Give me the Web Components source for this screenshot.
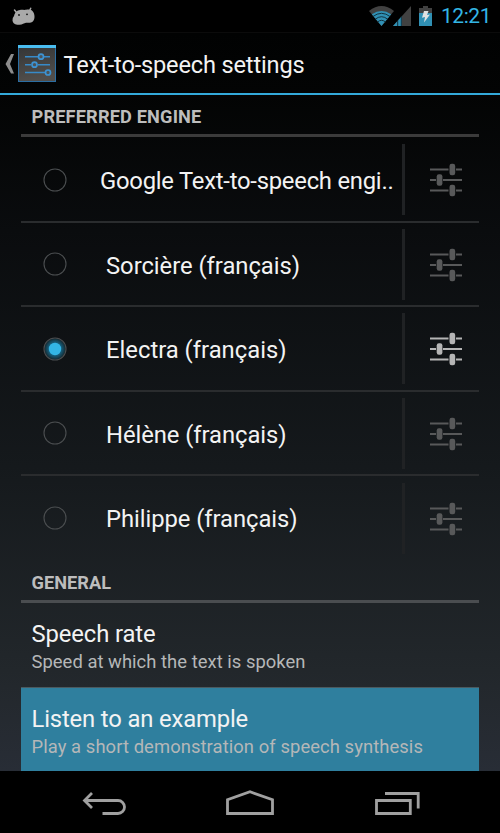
<!DOCTYPE html>
<html lang="en">
<head>
<meta charset="utf-8">
<title>Text-to-speech settings</title>
<style>
html,body{margin:0;height:100%;background:#000;overflow:hidden}
body{font-family:Roboto,"Noto Sans",sans-serif;color:#f3f3f3}
</style>
</head>
<body>
<tts-screen></tts-screen>
<script>
const define=(name,html,setup)=>{
  const t=document.createElement('template');t.innerHTML=html;
  customElements.define(name,class extends HTMLElement{
    constructor(){super();this.attachShadow({mode:'open'}).append(t.content.cloneNode(true));}
    connectedCallback(){setup&&setup(this,this.shadowRoot);}
  });
};

/* One line of text whose tracking is adjusted to reach a given advance width. */
define('fit-text',`<style>:host{display:block;white-space:nowrap}span{display:inline-block}</style><span></span>`,(el,root)=>{
  const s=root.querySelector('span');s.textContent=el.getAttribute('text');
  const want=+el.getAttribute('width'),w=s.getBoundingClientRect().width;
  if(want&&w)s.style.letterSpacing=((want-w)/s.textContent.length)+'px';
});

define('status-bar',`<style>
:host{display:flex;height:32px;background:#000;align-items:flex-start;justify-content:space-between;box-sizing:border-box;padding:0 9px 0 12px}
svg{display:block}.right{display:flex}
fit-text{font-size:21px;line-height:33px;color:#33b5e5;margin-left:9px}
.w{margin:6px 0 0}.b{margin:5px 0 0 7px}.d{margin-top:7px}
</style>
<svg class="d" width="24" height="19" viewBox="0 0 24 19"><g fill="#a9a9a9"><path d="M2 9C3 5 5 3.500 8 3C10 2.600 12 3.200 14 2.800C18 2 20.500 3 21.800 6C23 9 22.800 13 20.500 14.800C18.500 16.300 16 15.500 14 15.700C12 16 10.500 17.700 7.500 17.700C4 18 1 17 .5 13.500Q.3 10.500 2 9Z"/><path d="M4.500 5.500L2.500 3M17.500 4L18.700 1.200" stroke="#a9a9a9" stroke-width="1.500" stroke-linecap="round"/></g><circle cx="7" cy="8" r=".9" fill="#111"/><circle cx="15" cy="7.300" r=".9" fill="#111"/></svg>
<div class="right">
<svg class="w" width="43" height="21" viewBox="0 0 43 21"><path d="M0 5Q12.500-5 25 5L12.500 20Z" fill="#414141"/><path d="M2.800 8.300Q12.500 1.600 22.200 8.300L12.500 20Z" fill="#3090b4"/><path d="M3.800 10.600Q12.500 4 21.200 10.600M6 13.400Q12.500 8 19 13.400M8.500 16Q12.500 12.600 16.500 16" fill="none" stroke="#0c2833" stroke-width=".9"/><path d="M42 0V20H24Z" fill="#414141"/><path d="M24 20L33 10V20Z" fill="#3090b4"/><path d="M28.700 14V20M32.300 10V20" stroke="#07141a" stroke-width=".8"/></svg>
<svg class="b" width="13" height="22" viewBox="0 0 13 22"><path d="M4 1H9V3H13V8H0V3H4Z" fill="#414141"/><path d="M0 8H13V21H0Z" fill="#3090b4"/><path d="M5 6H9.500L8 10L11 9.500L5 17.500L6 12L3 12.700Z" fill="#e2e2e2"/></svg>
<fit-text text="12:21" width="50"></fit-text></div>`);

define('action-bar',`<style>
:host{display:flex;height:63px;box-sizing:border-box;border-top:1px solid #0b0b0b;border-bottom:2px solid #33a9da;background:linear-gradient(#010202,#030404);padding-left:5px}
.c{margin:21px 3px 0 0}.s{margin-top:12px}fit-text{font-size:23.600px;line-height:30px;margin:17px 0 0 7.500px}svg{display:block}
</style>
<svg class="c" width="10" height="20" viewBox="0 0 10 20"><path d="M6 0H9L5 10L9 19.500H6L.5 10Z" fill="#8c8c8c"/></svg>
<svg class="s" width="38" height="37" viewBox="0 0 38 37"><defs><linearGradient id="g" x2=".2" y2="1"><stop stop-color="#333536"/><stop offset="1" stop-color="#514e4b"/></linearGradient></defs><rect x=".5" y=".5" width="37" height="36" fill="url(#g)" stroke="#2b6ea3"/><path d="M0 0H38V3H0Z" fill="#4abdf0"/><path d="M7 11.700H20M26 11.700H32M7 19.700H13M20 19.700H32M7 27.500H27" stroke="#378ac8" stroke-width="1.500"/><g fill="#4d5357" stroke="#3d93d2" stroke-width="1.700"><circle cx="23" cy="11.700" r="2.500"/><circle cx="16.500" cy="19.700" r="2.500"/><circle cx="30" cy="27.500" r="2.500"/></g></svg>
<fit-text text="Text-to-speech settings" width="241"></fit-text>`);

define('section-header',`<style>
:host{display:block;box-sizing:border-box;height:42px;margin-bottom:1px;border-bottom:3px solid var(--line,#3b3b3b);padding:0 0 0 10.500px;font-size:18.200px;font-weight:700;line-height:43px;color:#bdbdbd}
</style><slot></slot>`);

define('sliders-icon',`<style>:host{display:block;color:#58595a}:host([on]){color:#b5b5b5}svg{display:block}</style>
<svg width="32" height="34" viewBox="0 0 32 34"><path d="M0 6.500H18.500M26 6.500H32M0 17H6M13 17H32M0 27.500H18.500M26 27.500H32" stroke="currentColor" stroke-width="1.900"/><g fill="currentColor"><rect x="19.500" y=".7" width="5.700" height="11.600" rx="2.200"/><rect x="6.700" y="11.200" width="5.700" height="11.600" rx="2.200"/><rect x="19.500" y="21.700" width="5.700" height="11.600" rx="2.200"/></g></svg>`);

define('radio-mark',`<style>:host{display:block}svg{display:block}.dot{display:none}:host([on]) .dot{display:block}</style>
<svg width="24" height="24" viewBox="0 0 24 24"><defs><radialGradient id="h"><stop offset=".45" stop-color="#177399"/><stop offset=".95" stop-color="#15313c"/></radialGradient></defs><circle class="dot" cx="12" cy="12" r="10.500" fill="url(#h)"/><circle cx="12" cy="12" r="11" fill="none" stroke="#4b4e50" stroke-width="1.100"/><circle class="dot" cx="12" cy="12" r="6.200" fill="#33b5e5"/></svg>`);

define('engine-row',`<style>
:host{display:grid;grid-template-columns:81px 1fr 57px;height:84.600px;box-sizing:border-box;border-bottom:2px solid #2a2c2e}
:host([last]){border-bottom-color:transparent}
radio-mark{margin:29.700px 0 0 21.500px}
fit-text{font-size:23.800px;line-height:30px;margin-top:28px}
.side{box-sizing:border-box;width:77px;height:71px;margin:6.200px 0 0 -20px;border-left:3px solid #202224;padding:19px 0 0 24.500px}
</style><radio-mark></radio-mark><fit-text></fit-text><div class="side"><sliders-icon></sliders-icon></div>`,(el,r)=>{
  if(el.hasAttribute('on')){r.querySelector('radio-mark').setAttribute('on','');r.querySelector('sliders-icon').setAttribute('on','');}
  const old=r.querySelector('fit-text'),t=document.createElement('fit-text');
  t.setAttribute('text',el.getAttribute('name'));t.setAttribute('width',el.getAttribute('width'));
  t.style.marginLeft=(el.getAttribute('indent')||4)+'px';old.replaceWith(t);
});

define('setting-item',`<style>
:host{display:block;height:83.300px;box-sizing:border-box;padding:15.500px 0 0 10.500px}
:host([active]){height:84.500px;background:#2f7f9e;border-top:1px solid #4b5a60;padding-top:16px}
::slotted([slot=title]){font-size:23.800px;line-height:30px;color:#f3f3f3}
::slotted([slot=note]){font-size:18.400px;line-height:24px;color:#b5b7b8;margin-top:1px}
</style><slot name="title"></slot><slot name="note"></slot>`);

define('nav-bar',`<style>:host{display:flex;height:62px;background:#000;justify-content:space-between;box-sizing:border-box;padding:18px 80px 0 81.500px}svg{display:block;fill:none;stroke:#a0a0a0;stroke-width:2.800}</style>
<svg width="45" height="28" viewBox="0 0 45 28"><path d="M2 11.500H36A6.500 6.500 0 0 1 36 24.500H20.500M10 4L2.500 11.500L10 19"/></svg>
<svg width="49" height="28" viewBox="0 0 49 28"><path d="M1.500 24.500V10.800L24 2.800L46.500 10.800V24.500Z"/></svg>
<svg width="45" height="28" viewBox="0 0 45 28"><path d="M1.500 11.500H35.300V24.500H1.500ZM10 4.500H43.200V19.500"/></svg>`);

define('tts-screen',`<style>
:host{display:flex;flex-direction:column;height:833px;width:500px}
main{flex:1;min-height:0;overflow:hidden;box-sizing:border-box;padding:0 21px;background:linear-gradient(#030404,#0a0c0e 20%,#15191c 55%,#22272b 85%,#282d36)}
</style>
<status-bar></status-bar><action-bar></action-bar>
<main>
<section-header><fit-text text="PREFERRED ENGINE" width="170"></fit-text></section-header>
<engine-row name="Google Text-to-speech engi.." width="293.500" indent="-2"></engine-row>
<engine-row name="Sorcière (français)" width="194"></engine-row>
<engine-row name="Electra (français)" width="180.500" on></engine-row>
<engine-row name="Hélène (français)" width="180.500"></engine-row>
<engine-row name="Philippe (français)" width="191.500" last></engine-row>
<section-header style="--line:#4a4d50"><fit-text text="GENERAL" width="79.500"></fit-text></section-header>
<setting-item><fit-text slot="title" text="Speech rate" width="124"></fit-text><fit-text slot="note" text="Speed at which the text is spoken" width="274"></fit-text></setting-item>
<setting-item active><fit-text slot="title" text="Listen to an example" width="216.500"></fit-text><fit-text slot="note" text="Play a short demonstration of speech synthesis" width="391.500"></fit-text></setting-item>
</main>
<nav-bar></nav-bar>`);
</script>
</body>
</html>
